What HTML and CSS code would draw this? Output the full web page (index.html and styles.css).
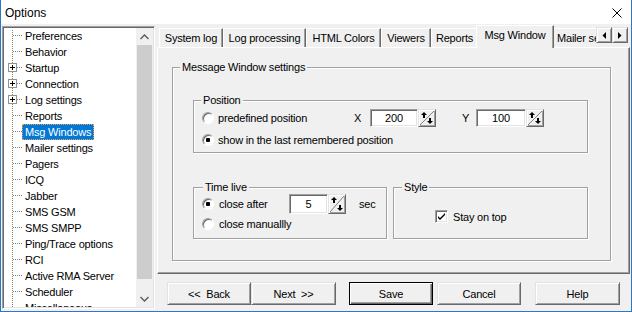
FILE: index.html
```html
<!DOCTYPE html>
<html lang="en">
<head>
  <meta charset="UTF-8">
  <title>Options</title>
  <link rel="stylesheet" href="styles.css">
</head>
<body>
  <div class="window">
    <div class="titlebar">
      <span class="title">Options</span>
      <svg class="close" width="10" height="10" viewBox="0 0 10 10"><path d="M0.5 0.5 L9.5 9.5 M9.5 0.5 L0.5 9.5" stroke="#000" stroke-width="1"/></svg>
    </div>

    <div class="frame">
      <div class="tree">
        <div class="tree-list">
          <div class="node"><span class="branch"></span><span class="label">Preferences</span></div>
          <div class="node"><span class="branch"></span><span class="label">Behavior</span></div>
          <div class="node"><span class="expander"></span><span class="branch short"></span><span class="label">Startup</span></div>
          <div class="node"><span class="expander"></span><span class="branch short"></span><span class="label">Connection</span></div>
          <div class="node"><span class="expander"></span><span class="branch short"></span><span class="label">Log settings</span></div>
          <div class="node"><span class="branch"></span><span class="label">Reports</span></div>
          <div class="node"><span class="branch"></span><span class="label selected">Msg Windows</span></div>
          <div class="node"><span class="branch"></span><span class="label">Mailer settings</span></div>
          <div class="node"><span class="branch"></span><span class="label">Pagers</span></div>
          <div class="node"><span class="branch"></span><span class="label">ICQ</span></div>
          <div class="node"><span class="branch"></span><span class="label">Jabber</span></div>
          <div class="node"><span class="branch"></span><span class="label">SMS GSM</span></div>
          <div class="node"><span class="branch"></span><span class="label">SMS SMPP</span></div>
          <div class="node"><span class="branch"></span><span class="label">Ping/Trace options</span></div>
          <div class="node"><span class="branch"></span><span class="label">RCI</span></div>
          <div class="node"><span class="branch"></span><span class="label">Active RMA Server</span></div>
          <div class="node"><span class="branch"></span><span class="label">Scheduler</span></div>
          <div class="node"><span class="branch"></span><span class="label">Miscellaneous</span></div>
        </div>
        <div class="vscroll">
          <div class="sb-btn"><svg width="9" height="6" viewBox="0 0 9 6"><polyline points="0.5,5 4.5,1 8.5,5" fill="none" stroke="#606060" stroke-width="1.5"/></svg></div>
          <div class="sb-thumb"></div>
          <div class="sb-track"></div>
          <div class="sb-btn"><svg width="9" height="6" viewBox="0 0 9 6"><polyline points="0.5,1 4.5,5 8.5,1" fill="none" stroke="#606060" stroke-width="1.5"/></svg></div>
        </div>
      </div>

      <div class="main">
        <div class="tabs">
          <div class="tab w-sys">System log</div>
          <div class="tab w-logp">Log processing</div>
          <div class="tab w-html">HTML Colors</div>
          <div class="tab w-view">Viewers</div>
          <div class="tab w-rep">Reports</div>
          <div class="tab active">Msg Window</div>
          <div class="tab clipped">Mailer settings</div>
          <div class="tab-arrows">
            <span class="arrow-btn"><svg width="4" height="7" viewBox="0 0 4 7"><polygon points="4,0 4,7 0.5,3.5" fill="#000"/></svg></span>
            <span class="arrow-btn"><svg width="4" height="7" viewBox="0 0 4 7"><polygon points="0,0 0,7 3.5,3.5" fill="#000"/></svg></span>
          </div>
        </div>

        <div class="page">
          <div class="group group-main">
            <span class="group-title">Message Window settings</span>

            <div class="group group-pos">
              <span class="group-title">Position</span>
              <div class="opt-row">
                <span class="radio"></span>
                <span class="opt-text pos-text">predefined position</span>
                <span class="axis">X</span>
                <span class="edit edit-x">200</span>
                <span class="spin"><svg width="14" height="14" viewBox="0 0 14 14"><path d="M0 14 L14 0" stroke="#808080" stroke-width="1"/><polygon points="1,4 4,1 7,4" fill="#000"/><rect x="3" y="4" width="2" height="3" fill="#000"/><rect x="9" y="7" width="2" height="3" fill="#000"/><polygon points="7,10 10,13 13,10" fill="#000"/></svg></span>
                <span class="axis axis-y">Y</span>
                <span class="edit edit-y">100</span>
                <span class="spin"><svg width="14" height="14" viewBox="0 0 14 14"><path d="M0 14 L14 0" stroke="#808080" stroke-width="1"/><polygon points="1,4 4,1 7,4" fill="#000"/><rect x="3" y="4" width="2" height="3" fill="#000"/><rect x="9" y="7" width="2" height="3" fill="#000"/><polygon points="7,10 10,13 13,10" fill="#000"/></svg></span>
              </div>
              <div class="opt-row">
                <span class="radio checked"></span>
                <span class="opt-text">show in the last remembered position</span>
              </div>
            </div>

            <div class="group-row">
              <div class="group group-time">
                <span class="group-title">Time live</span>
                <div class="opt-row tall">
                  <span class="radio checked"></span>
                  <span class="opt-text time-text">close after</span>
                  <span class="edit edit-sec">5</span>
                  <span class="spin spin-tall"><svg width="14" height="16" viewBox="0 0 14 16"><path d="M0 16 L14 0" stroke="#808080" stroke-width="1"/><polygon points="1,4 4,1 7,4" fill="#000"/><rect x="3" y="4" width="2" height="3" fill="#000"/><rect x="9" y="9" width="2" height="3" fill="#000"/><polygon points="7,12 10,15 13,12" fill="#000"/></svg></span>
                  <span class="unit">sec</span>
                </div>
                <div class="opt-row tall">
                  <span class="radio"></span>
                  <span class="opt-text time-text">close manuallly</span>
                </div>
              </div>

              <div class="group group-style">
                <span class="group-title">Style</span>
                <div class="check-row">
                  <span class="checkbox"><svg width="7" height="7" viewBox="0 0 7 7"><path d="M0 3 L0 5 L2 7 L7 2 L7 0 L2 5 Z" fill="#000"/></svg></span>
                  <span class="opt-text">Stay on top</span>
                </div>
              </div>
            </div>
          </div>
        </div>

        <div class="buttons">
          <button class="btn btn-back">&lt;&lt;&nbsp; Back</button>
          <button class="btn btn-next">Next&nbsp; &gt;&gt;</button>
          <button class="btn btn-save">Save</button>
          <button class="btn btn-cancel">Cancel</button>
          <button class="btn btn-help">Help</button>
        </div>
      </div>
    </div>
  </div>
</body>
</html>
```

FILE: styles.css
```css
* { box-sizing: border-box; }
body { margin: 0; font-family: "Liberation Sans", Arial, sans-serif; font-size: 11px; letter-spacing: -0.2px; color: #000; background: #fff; }

.window { width: 632px; height: 312px; border: 1px solid #2a78c8; border-top: none; display: flex; flex-direction: column; background: #f0f0f0; overflow: hidden; }

.titlebar { height: 24px; flex: none; background: #fff; display: flex; align-items: center; padding: 1px 0 0 4px; }
.title { font-size: 12px; letter-spacing: 0; flex: 1; }
.close { margin-right: 9px; }

.frame { flex: 1; display: flex; padding: 0 1px; min-height: 0; }

/* tree */
.tree { width: 153px; height: 283px; margin-top: 2px; display: flex; border: 1px solid; border-color: #a0a0a0 #fff #fff #a0a0a0; box-shadow: inset 1px 1px 0 #696969, inset -1px -1px 0 #e3e3e3; padding: 1px; }
.tree-list { width: 132px; overflow: hidden; background: repeating-linear-gradient(#808080 0 1px, transparent 1px 2px) 8px 2px / 1px 100% no-repeat, #fff; }
.node { height: 16px; display: flex; align-items: center; white-space: nowrap; }
.branch { width: 9px; height: 16px; margin-left: 9px; background: repeating-linear-gradient(to right, #808080 0 1px, transparent 1px 2px) 0 7px / 100% 1px no-repeat; }
.branch.short { width: 5px; margin-left: 0; }
.expander { width: 9px; height: 9px; margin-left: 4px; margin-top: -1px; border: 1px solid #919191; background: linear-gradient(#000, #000) 1px 3px / 5px 1px no-repeat, linear-gradient(#000, #000) 3px 1px / 1px 5px no-repeat, #fff; }
.label { height: 16px; line-height: 14px; padding: 0 2px; border: 1px solid transparent; }
.label.selected { background: #0078d7; color: #fff; border: 1px dotted #f5a04a; }

.vscroll { width: 17px; display: flex; flex-direction: column; background: #f0f0f0; }
.sb-btn { height: 17px; flex: none; display: flex; align-items: center; justify-content: center; }
.sb-thumb { height: 234px; margin: 0 1px; background: #cdcdcd; flex: none; }
.sb-track { flex: 1; }

/* right side */
.main { flex: 1; display: flex; flex-direction: column; margin-left: 2px; padding-top: 1px; min-width: 0; }

.tabs { height: 22px; flex: none; display: flex; align-items: flex-end; padding-left: 2px; }
.tab { height: 19px; display: flex; align-items: center; justify-content: center; border-top: 1px solid #fff; border-left: 1px solid #fff; border-right: 1px solid #696969; box-shadow: inset -1px 0 0 #a0a0a0; white-space: nowrap; padding-bottom: 1px; }
.w-sys { width: 64px; }
.w-logp { width: 83px; }
.w-html { width: 75px; }
.w-view { width: 50px; }
.w-rep { width: 47px; }
.tab.active { width: 78px; height: 23px; margin: 0 -2px -1px; background: #f0f0f0; position: relative; z-index: 1; padding-bottom: 4px; }
.tab.clipped { width: 44px; overflow: hidden; justify-content: flex-start; padding-left: 4px; border-right: none; box-shadow: none; }
.tab-arrows { align-self: flex-start; margin-top: 2px; display: flex; }
.arrow-btn { width: 16px; height: 16px; display: flex; align-items: center; justify-content: center; border: 1px solid; border-color: #e3e3e3 #696969 #696969 #e3e3e3; box-shadow: inset 1px 1px 0 #fff, inset -1px -1px 0 #a0a0a0; background: #f0f0f0; }

.page { height: 227px; flex: none; display: flex; flex-direction: column; border: 1px solid; border-color: #fff #696969 #696969 #fff; box-shadow: inset -1px -1px 0 #a0a0a0; padding: 19px 18px 12px 14px; }

/* group boxes */
.group { border: 1px solid #a0a0a0; box-shadow: inset 1px 1px 0 #fff, 1px 1px 0 #fff; display: flex; flex-direction: column; }
.group-title { align-self: flex-start; line-height: 13px; margin: -7px 0 0 7px; padding: 0 2px; background: #f0f0f0; }
.group-main { flex: 1; }
.group-pos { margin: 26px 22px 0 20px; padding-bottom: 1px; }
.group-row { display: flex; margin: 34px 22px 0 20px; gap: 6px; }
.group-time { width: 194px; padding-bottom: 4px; }
.group-time .group-title { margin-left: 9px; }
.group-style { flex: 1; }
.group-style .group-title { margin-left: 8px; }

.opt-row { height: 22px; display: flex; align-items: center; padding-left: 8px; white-space: nowrap; }
.opt-row.tall { height: 20px; }
.radio { width: 12px; height: 12px; flex: none; border-radius: 50%; border: 1px solid; border-color: #a0a0a0 #fff #fff #a0a0a0; box-shadow: inset 1px 1px 0 #696969; background: #fff; }
.radio.checked { background: radial-gradient(circle, #000 0 2px, #fff 2.5px); }
.opt-text { margin-left: 4px; }
.pos-text { width: 136px; }
.time-text { width: 70px; margin-left: 5px; }
.axis { width: 16px; }
.axis-y { width: 14px; margin-left: 26px; }

.edit { height: 18px; display: flex; align-items: center; justify-content: center; background: #fff; border: 1px solid; border-color: #a0a0a0 #fff #fff #a0a0a0; box-shadow: inset 1px 1px 0 #696969, inset -1px -1px 0 #e3e3e3; }
.edit-x { width: 48px; }
.edit-y { width: 50px; }
.edit-sec { width: 39px; height: 20px; }
.spin { width: 18px; height: 18px; display: flex; align-items: center; justify-content: center; border: 1px solid; border-color: #e3e3e3 #696969 #696969 #e3e3e3; box-shadow: inset 1px 1px 0 #fff, inset -1px -1px 0 #a0a0a0; background: #f0f0f0; }
.spin-tall { height: 20px; }
.unit { margin-left: 13px; }

.check-row { display: flex; align-items: center; margin: 16px 0 0 41px; }
.checkbox { width: 13px; height: 13px; display: flex; align-items: center; justify-content: center; background: #fff; border: 1px solid; border-color: #a0a0a0 #fff #fff #a0a0a0; box-shadow: inset 1px 1px 0 #696969, inset -1px -1px 0 #e3e3e3; }
.check-row .opt-text { margin-left: 5px; }

/* bottom buttons */
.buttons { display: flex; margin-top: 8px; }
.btn { height: 23px; padding: 0; font: inherit; letter-spacing: inherit; color: #000; background: #f0f0f0; border: 1px solid; border-color: #e3e3e3 #696969 #696969 #e3e3e3; box-shadow: inset 1px 1px 0 #fff, inset -1px -1px 0 #a0a0a0; }
.btn-back { width: 84px; margin-left: 10px; }
.btn-next { width: 85px; }
.btn-save { width: 84px; margin-left: 13px; border-color: #000; box-shadow: inset 1px 1px 0 #fff, inset -1px -1px 0 #696969, inset -2px -2px 0 #a0a0a0; }
.btn-cancel { width: 84px; margin-left: 4px; }
.btn-help { width: 85px; margin-left: 14px; }
```
